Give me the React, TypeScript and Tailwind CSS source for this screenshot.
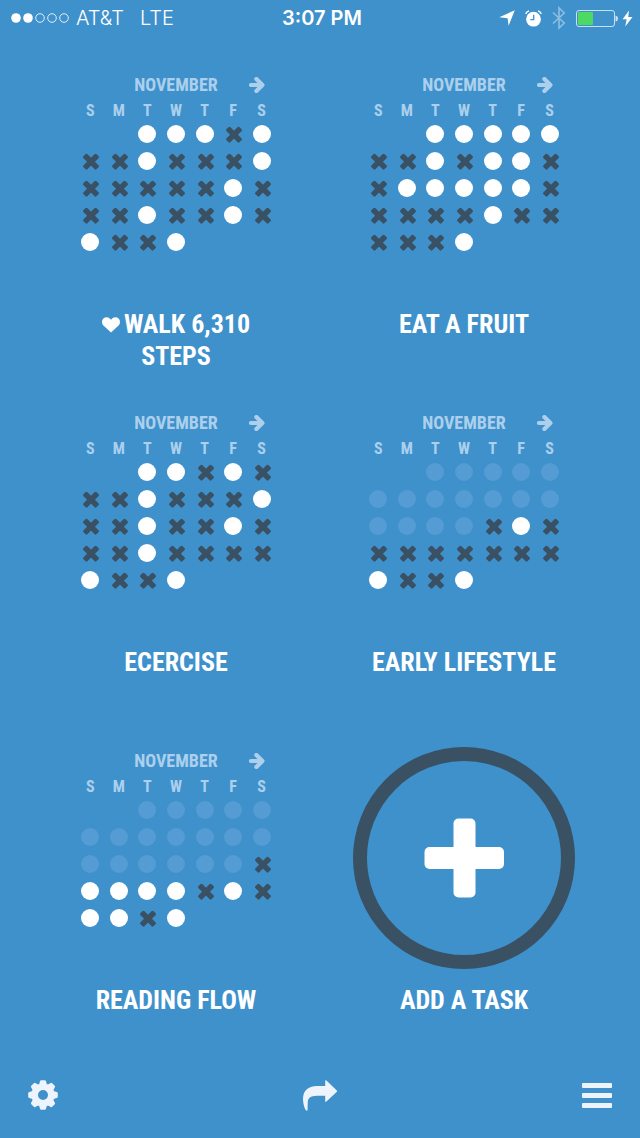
import React from "react";

type Mark = "o" | "x" | "-" | " ";

interface Task {
  title: string;
  health?: boolean;
  weeks: string[];
}

const DAYS = ["S", "M", "T", "W", "T", "F", "S"];

// o = done, x = missed, - = before the task was started
const TASKS: Task[] = [
  { title: "WALK 6,310 STEPS", health: true, weeks: ["  oooxo", "xxoxxxo", "xxxxxox", "xxoxxox", "oxxo   "] },
  { title: "EAT A FRUIT", weeks: ["  ooooo", "xxoxoox", "xooooox", "xxxxoxx", "xxxo   "] },
  { title: "ECERCISE", weeks: ["  ooxox", "xxoxxxo", "xxoxxox", "xxoxxxx", "oxxo   "] },
  { title: "EARLY LIFESTYLE", weeks: ["  -----", "-------", "----xox", "xxxxxxx", "oxxo   "] },
  { title: "READING FLOW", weeks: ["  -----", "-------", "------x", "ooooxox", "ooxo   "] },
];

function DayMark({ mark }: { mark: Mark }) {
  if (mark === " ") return null;
  if (mark === "x") {
    return (
      <svg viewBox="0 0 18 18" className="mx-auto block size-[18px]" fill="#3a5063" role="img" aria-label="missed">
        <g transform="translate(10 9.700)">
          <rect x="-9.200" y="-2.800" width="18.400" height="5.600" rx="1.500" transform="rotate(45)" />
          <rect x="-9.200" y="-2.800" width="18.400" height="5.600" rx="1.500" transform="rotate(-45)" />
        </g>
      </svg>
    );
  }
  return (
    <span
      className={
        mark === "o"
          ? "mx-auto block size-[18px] rounded-full bg-white"
          : "mx-auto block size-[18px] rounded-full bg-[#549cd3]"
      }
    />
  );
}

function Calendar({ task }: { task: Task }) {
  return (
    <div className="h-[222px] w-[200px] text-[#acd0ec]">
      <div className="grid h-[27px] grid-cols-[1fr_auto_1fr] items-center">
        <h3 className="col-start-2 text-[18px] leading-[26px] font-bold">NOVEMBER</h3>
        <button type="button" aria-label="Next month" className="mr-[11px] justify-self-end">
          <svg viewBox="0 0 16 16" className="block size-4" fill="none" stroke="currentColor" strokeWidth="4.200">
            <path d="M2 8H12.500" strokeLinecap="round" />
            <path d="M7.400 2 13.400 8 7.400 14" strokeLinecap="round" strokeLinejoin="round" />
          </svg>
        </button>
      </div>
      <table className="w-full table-fixed border-collapse">
        <thead>
          <tr className="h-[22px]">
            {DAYS.map((d, i) => (
              <th key={i} scope="col" className="p-0 pt-1 text-center text-[16px] leading-[18px] font-bold">
                {d}
              </th>
            ))}
          </tr>
        </thead>
        <tbody>
          {task.weeks.map((week, i) => (
            <tr key={i} className="h-[27px]">
              {week.split("").map((m, j) => (
                <td key={j} className="p-0 align-middle">
                  <DayMark mark={m as Mark} />
                </td>
              ))}
            </tr>
          ))}
        </tbody>
      </table>
    </div>
  );
}

function Heart() {
  return (
    <svg viewBox="0 0 18 16" className="mr-1 inline-block h-4 w-[18px] align-baseline" fill="white" aria-hidden="true">
      <path d="M9 15.600 1.400 8.400C-.4 6.500-.4 3.200 1.400 1.500 3.600-.4 7 .1 9 2.800 11 .1 14.400-.4 16.600 1.500 18.400 3.200 18.400 6.500 16.600 8.400Z" />
    </svg>
  );
}

function Title({ children }: { children: React.ReactNode }) {
  return (
    <h2 className="mt-[15px] min-h-16 w-[200px] text-center text-[26px] leading-8 font-bold text-white">{children}</h2>
  );
}

function StatusBar() {
  return (
    <header className="grid h-9 grid-cols-[1fr_auto_1fr] items-center pr-[7px] pl-[11px] font-['Inter',sans-serif] text-[20px] leading-9 text-white">
      <div className="flex items-center">
        <svg viewBox="0 0 58 10" className="mr-[7px] h-[10px] w-[58px]" role="img" aria-label="Signal: 2 of 5">
          <circle cx="5" cy="5" r="4.800" fill="white" />
          <circle cx="17" cy="5" r="4.800" fill="white" />
          <g fill="none" stroke="#e3effa" strokeWidth="1">
            <circle cx="29" cy="5" r="4.300" />
            <circle cx="41" cy="5" r="4.300" />
            <circle cx="53" cy="5" r="4.300" />
          </g>
        </svg>
        <span className="font-light">AT&amp;T</span>
        <span className="ml-4 font-light">LTE</span>
      </div>
      <span className="font-semibold">3:07 PM</span>
      <div className="flex items-center justify-end">
        <svg viewBox="0 0 16 16" className="mr-[10px] size-4" fill="white" role="img" aria-label="Location">
          <path d="M15.800.2 9.600 15.700 8.600 8.300.2 7.300Z" />
        </svg>
        <svg viewBox="0 0 17 17" className="mr-[10px] size-[17px]" role="img" aria-label="Alarm">
          <circle cx="8.500" cy="9.200" r="7.400" fill="white" />
          <path d="M8.700 4.800V9.600H5.400" fill="none" stroke="#3f91cc" strokeWidth="1.300" />
          <path d="M.7 4Q1.500 1.500 4 .8M16.300 4Q15.500 1.500 13 .8" fill="none" stroke="white" strokeWidth="1.300" />
        </svg>
        <svg viewBox="0 0 14 24" className="mr-[10px] h-6 w-[14px]" fill="none" stroke="#8abde2" strokeWidth="1.700" role="img" aria-label="Bluetooth">
          <path d="M1 6.500 12.200 17 7 22V2L12.200 7 1 17.500" />
        </svg>
        <svg viewBox="0 0 42 17" className="mr-1 h-[17px] w-[42px]" role="img" aria-label="Battery">
          <rect x=".5" y=".5" width="38" height="16" rx="2.500" fill="none" stroke="#c9e0f3" />
          <rect x="2" y="2" width="15" height="13" rx="1" fill="#4cd964" />
          <path d="M39.500 5.500Q42 6 42 8.500T39.500 11.500Z" fill="#c9e0f3" />
        </svg>
        <svg viewBox="0 0 11 17" className="h-[17px] w-[11px]" fill="white" role="img" aria-label="Charging">
          <path d="M7 .4.600 9.300H4.600L3.300 16.600 10.500 6.900H6.200Z" />
        </svg>
      </div>
    </header>
  );
}

function AddTask() {
  return (
    <div className="flex flex-col items-center">
      <button
        type="button"
        aria-label="Add a task"
        className="flex size-[222px] items-center justify-center rounded-full border-[14px] border-[#3a5063]"
      >
        <svg viewBox="0 0 80 80" className="size-20" fill="white">
          <rect x="29.500" y=".5" width="22" height="79" rx="5" />
          <rect x=".5" y="29" width="79.500" height="22" rx="5" />
        </svg>
      </button>
      <Title>ADD A TASK</Title>
    </div>
  );
}

const TEETH = [0, 45, 90, 135, 180, 225, 270, 315];

function Toolbar() {
  return (
    <nav className="mt-auto flex h-[86px] items-center justify-between px-7 text-[#edf4fb]">
      <button type="button" aria-label="Settings">
        <svg viewBox="0 0 30 30" className="block size-[30px]" fill="currentColor">
          <circle cx="15" cy="15" r="8.300" fill="none" stroke="currentColor" strokeWidth="6.600" />
          {TEETH.map((a) => (
            <path key={a} d="M10.800 5.500 12 1.200Q12.200.2 13.200.2H16.800Q17.800.2 18 1.200L19.200 5.500Z" transform={`rotate(${a} 15 15)`} />
          ))}
        </svg>
      </button>
      <button type="button" aria-label="Share">
        <svg viewBox="0 0 34 31" className="block h-[31px] w-[34px]" fill="currentColor">
          <path d="M22.200 1Q22.200-.4 23.400.6L33.600 10.300Q34.500 11.200 33.600 12L23.400 21.600Q22.200 22.600 22.200 21.200V15.700H14C7 15.700 5 18.500 4.800 22Q4.600 25.500 4.600 29.500Q4.500 31.200 3.300 30.600C1.500 29 0 23 0 19 0 11 5 6 14 6H22.200Z" />
        </svg>
      </button>
      <button type="button" aria-label="Menu" className="flex w-[30px] flex-col gap-[5px]">
        <span className="h-[5px] rounded-[1px] bg-current" />
        <span className="h-[5px] rounded-[1px] bg-current" />
        <span className="h-[5px] rounded-[1px] bg-current" />
      </button>
    </nav>
  );
}

export default function App() {
  return (
    <div className="flex min-h-screen flex-col bg-[#3f91cc] font-['Roboto_Condensed','Arial_Narrow','Liberation_Sans',sans-serif]">
      <StatusBar />
      <main className="grid grid-cols-2 gap-y-[37px] px-8 pt-[35px]">
        {TASKS.map((task) => (
          <section key={task.title} className="flex flex-col items-center">
            <Calendar task={task} />
            <Title>
              {task.health && <Heart />}
              {task.title}
            </Title>
          </section>
        ))}
        <AddTask />
      </main>
      <Toolbar />
    </div>
  );
}
